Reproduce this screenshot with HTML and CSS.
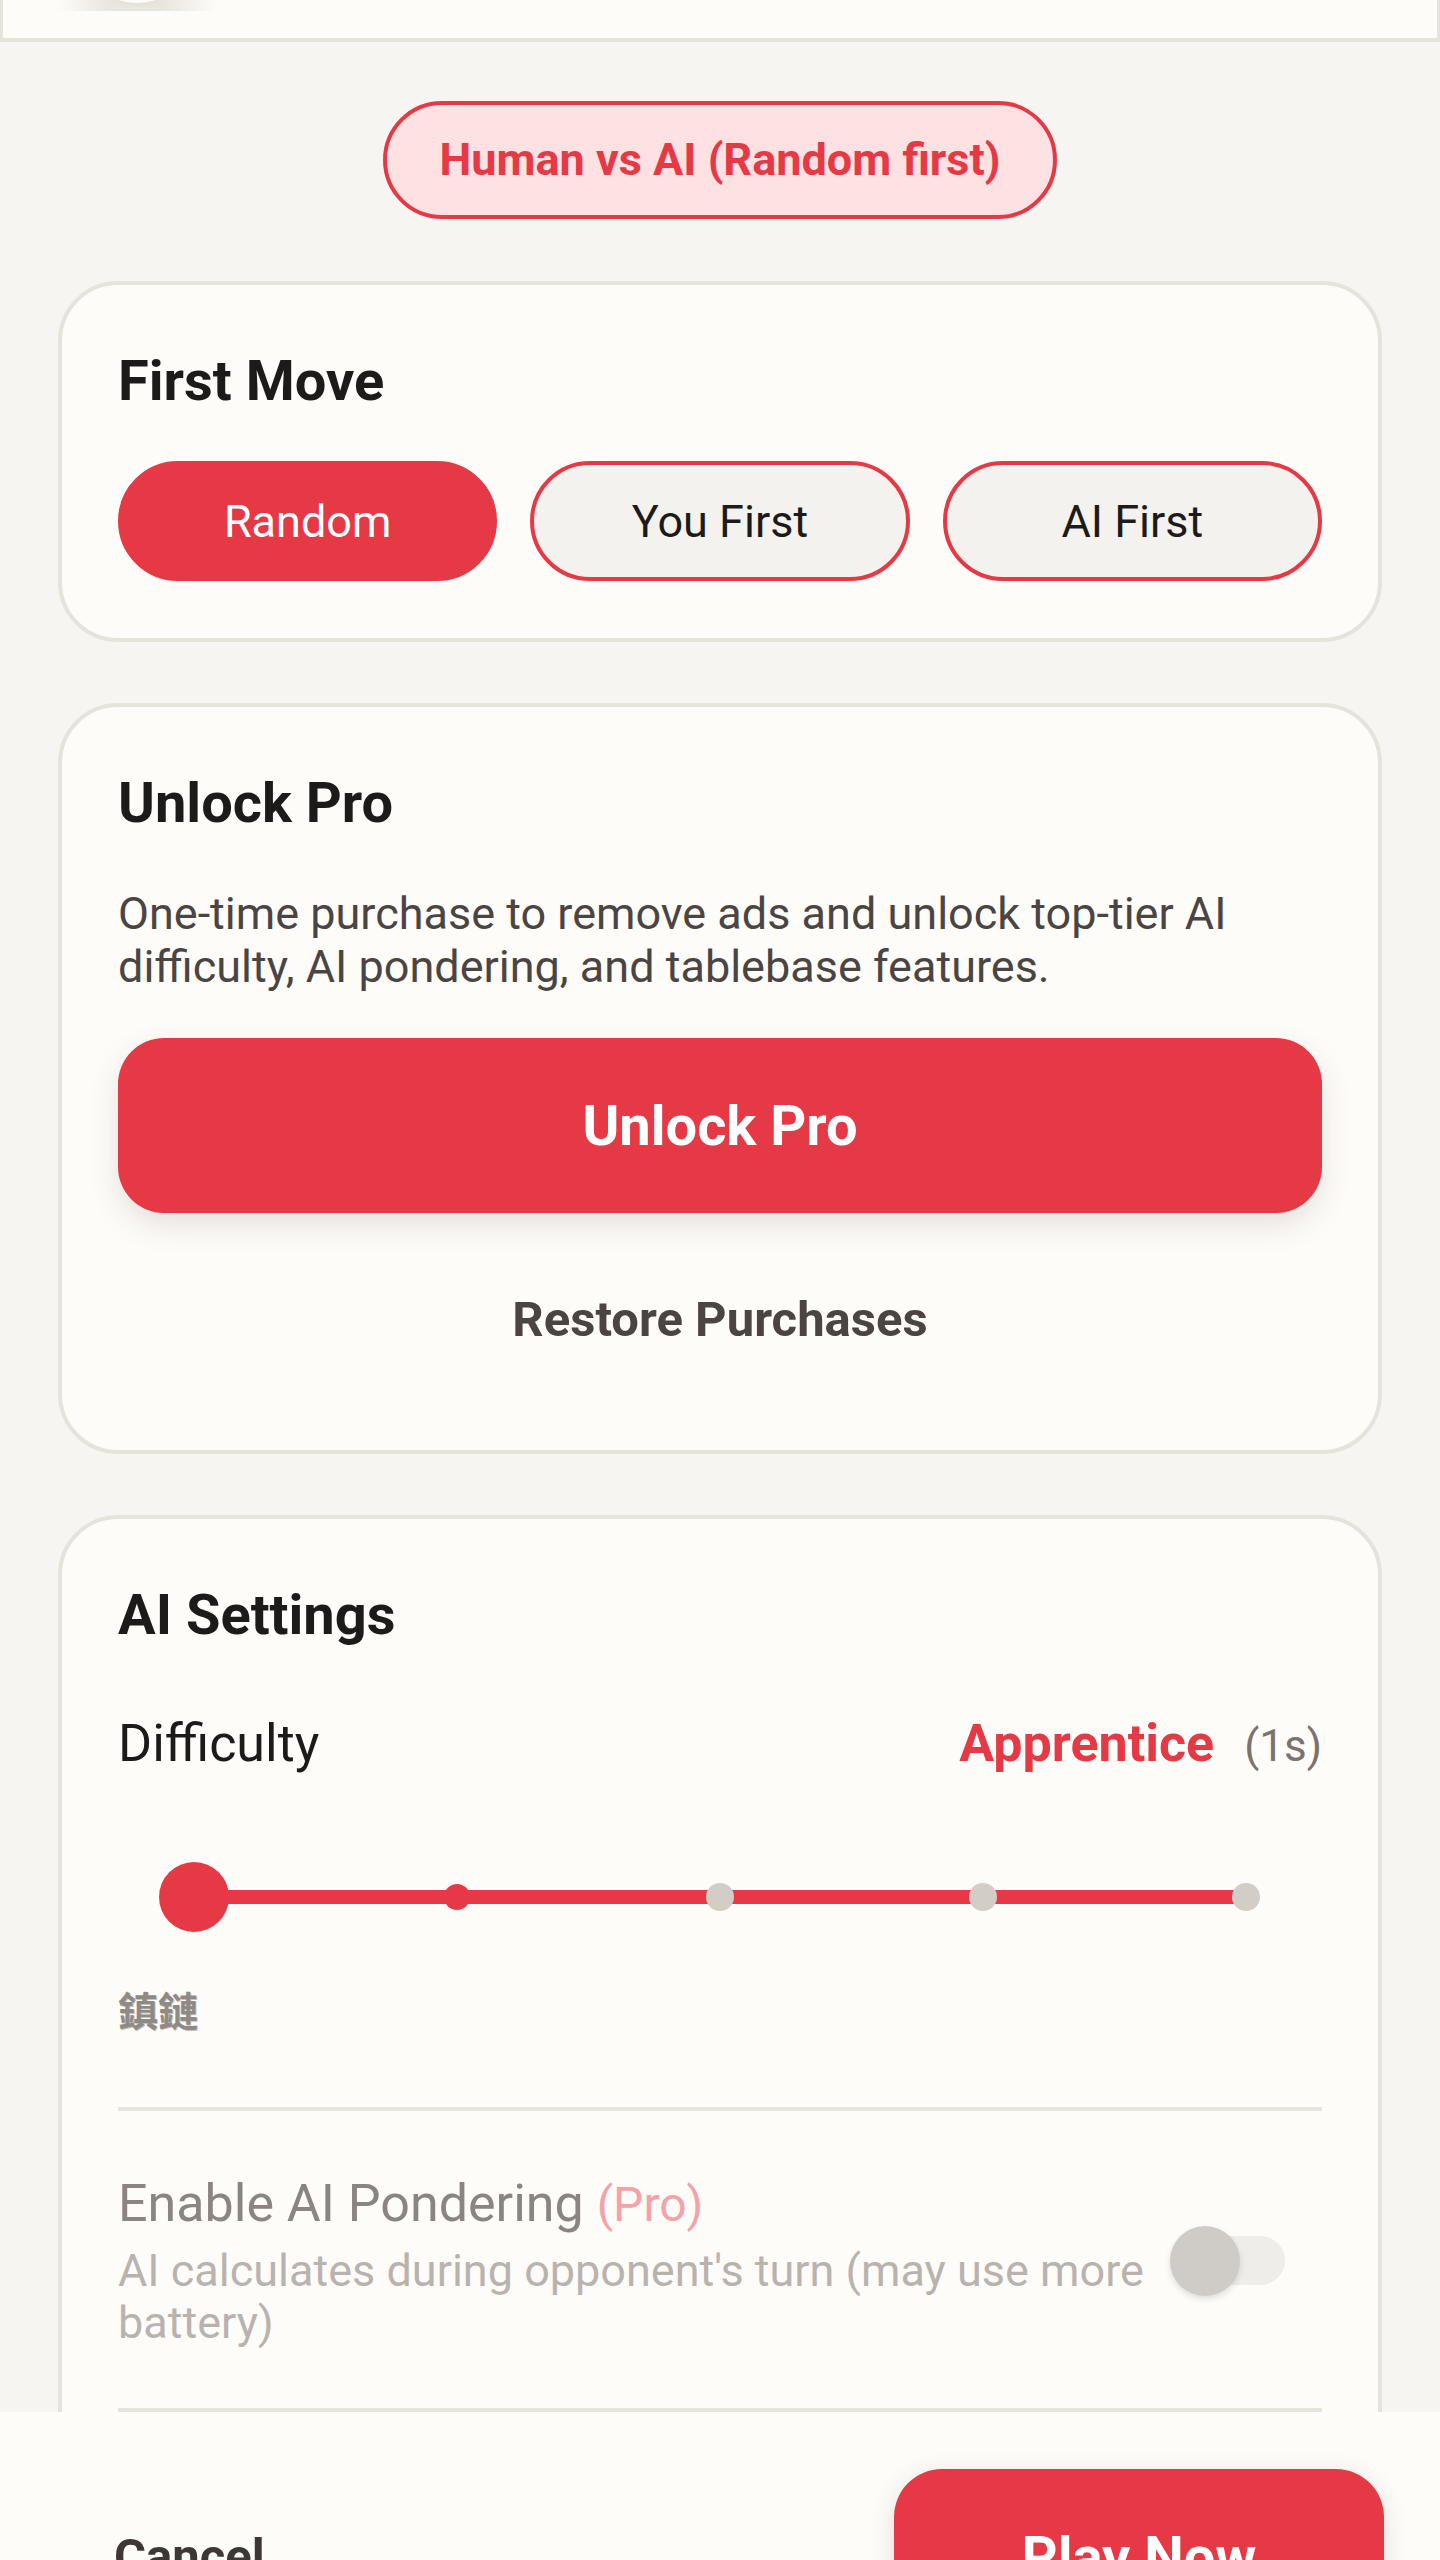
FILE: index.html
```html
<!DOCTYPE html>
<html lang="en">
<head>
<meta charset="utf-8">
<title>New Game</title>
<link rel="stylesheet" href="styles.css">
</head>
<body>
<div class="topbar">
  <div class="knob-shadow"></div>
  <div class="knob"></div>
</div>

<div class="mode-wrap">
  <div class="mode-pill">Human vs AI (Random first)</div>
</div>

<section class="card">
  <h2 class="card-title">First Move</h2>
  <div class="seg">
    <div class="seg-btn seg-btn--active">Random</div>
    <div class="seg-btn">You First</div>
    <div class="seg-btn">AI First</div>
  </div>
</section>

<section class="card">
  <h2 class="card-title">Unlock Pro</h2>
  <p class="card-desc">One-time purchase to remove ads and unlock top-tier AI difficulty, AI pondering, and tablebase features.</p>
  <div class="primary-btn">Unlock Pro</div>
  <div class="text-btn">Restore Purchases</div>
</section>

<section class="card card--last">
  <h2 class="card-title">AI Settings</h2>
  <div class="diff-row">
    <span class="diff-label">Difficulty</span>
    <span class="diff-value"><span class="diff-name">Apprentice</span><span class="diff-time">(1s)</span></span>
  </div>
  <div class="slider">
    <div class="slider-stops">
      <span class="stop stop--on"></span>
      <span class="stop stop--on"></span>
      <span class="stop"></span>
      <span class="stop"></span>
      <span class="stop"></span>
    </div>
    <span class="slider-thumb"></span>
  </div>
  <div class="level-label">鎮鏈</div>
  <div class="divider"></div>
  <div class="setting-row">
    <div class="setting-text">
      <div class="setting-title">Enable AI Pondering <span class="pro-tag">(Pro)</span></div>
      <div class="setting-desc">AI calculates during opponent's turn (may use more battery)</div>
    </div>
    <div class="switch">
      <span class="switch-track"></span>
      <span class="switch-thumb"></span>
    </div>
  </div>
  <div class="divider divider--second"></div>
  <div class="more-space"></div>
</section>

<div class="bottom-bar">
  <div class="cancel-btn">Cancel</div>
  <div class="play-btn">Play Now</div>
</div>
</body>
</html>
```

FILE: styles.css
```css
* { box-sizing: border-box; }

html, body {
  margin: 0;
  padding: 0;
}

body {
  background: #f7f5f2;
  font-family: Roboto, "Noto Sans", "Liberation Sans", sans-serif;
  color: #1c1b1a;
}

.topbar {
  position: relative;
  height: 42px;
  background: #fefcf9;
  border-left: 3px solid #e6e3dd;
  border-right: 3px solid #e6e3dd;
  border-bottom: 4px solid #e6e3dd;
  overflow: hidden;
}

.knob-shadow {
  position: absolute;
  left: 54px;
  top: 0;
  width: 160px;
  height: 11px;
  background: linear-gradient(90deg, rgba(230,226,220,0) 0%, rgba(230,226,220,0.9) 35%, rgba(230,226,220,0.9) 65%, rgba(230,226,220,0) 100%);
}

.knob {
  position: absolute;
  left: 74px;
  top: -114px;
  width: 120px;
  height: 120px;
  border-radius: 50%;
  background: #fefcf9;
  border: 3px solid #e6e3dd;
}

.mode-wrap {
  display: flex;
  justify-content: center;
  padding: 59px 0 62px;
}

.mode-pill {
  height: 118px;
  line-height: 110px;
  padding: 0 53px;
  border: 4px solid #e63946;
  border-radius: 60px;
  background: #fde1e3;
  color: #e63946;
  font-size: 45px;
  font-weight: 700;
}

.card {
  margin: 0 58px 61px;
  background: #fefcf9;
  border: 4px solid #e6e3dd;
  border-radius: 60px;
  padding: 60px 56px 57px;
}

.card-title {
  margin: 0;
  font-size: 56px;
  line-height: 72px;
  font-weight: 700;
  color: #1c1b1a;
}

.seg {
  margin-top: 44px;
  display: grid;
  grid-template-columns: repeat(3, 1fr);
  gap: 33px;
}

.seg-btn {
  height: 120px;
  border: 4px solid #e63946;
  border-radius: 60px;
  background: #f4f2ef;
  display: flex;
  align-items: center;
  justify-content: center;
  font-size: 45px;
  color: #1c1b1a;
}

.seg-btn--active {
  background: #e63946;
  color: #ffffff;
}

.card-desc {
  margin: 48px 0 0;
  font-size: 45px;
  line-height: 53px;
  color: #4a4543;
}

.primary-btn {
  margin-top: 45px;
  height: 175px;
  border-radius: 46px;
  background: #e63946;
  color: #ffffff;
  font-size: 56px;
  font-weight: 700;
  display: flex;
  align-items: center;
  justify-content: center;
  box-shadow: 0 12px 30px rgba(60, 50, 40, 0.13);
}

.text-btn {
  margin-top: 32px;
  height: 148px;
  display: flex;
  align-items: center;
  justify-content: center;
  font-size: 49px;
  font-weight: 700;
  color: #4a4543;
}

.diff-row {
  margin-top: 62px;
  display: flex;
  justify-content: space-between;
  align-items: baseline;
  line-height: 61px;
}

.diff-label {
  font-size: 52px;
  color: #1c1b1a;
}

.diff-name {
  font-size: 52px;
  font-weight: 700;
  color: #e63946;
}

.diff-time {
  margin-left: 30px;
  font-size: 44px;
  color: #7a7370;
}

.slider {
  position: relative;
  margin-top: 63px;
  height: 96px;
  padding: 0 62px;
}

.slider-stops {
  position: relative;
  height: 100%;
  display: flex;
  justify-content: space-between;
  align-items: center;
}

.slider-stops::before {
  content: "";
  position: absolute;
  left: 14px;
  right: 14px;
  top: 50%;
  height: 14px;
  margin-top: -7px;
  background: #e63946;
}

.stop {
  position: relative;
  width: 28px;
  height: 28px;
  border-radius: 50%;
  background: #d3cdc8;
}

.stop--on {
  background: #e63946;
  transform: scale(0.93);
}

.slider-thumb {
  position: absolute;
  left: 41px;
  top: 13px;
  width: 70px;
  height: 70px;
  border-radius: 50%;
  background: #e63946;
}

.level-label {
  margin-top: 36px;
  height: 56px;
  line-height: 56px;
  font-family: "Noto Sans CJK SC", "Noto Sans CJK TC", sans-serif;
  font-size: 40px;
  font-weight: 700;
  color: #8f8a86;
  text-shadow: 1px 1px 0 rgba(90, 84, 80, 0.35);
}

.divider {
  margin-top: 70px;
  height: 4px;
  background: #e6e3dd;
}

.setting-row {
  margin-top: 62px;
  display: flex;
  align-items: center;
  gap: 8px;
}

.setting-text {
  flex: 1;
}

.setting-title {
  font-size: 52px;
  line-height: 61px;
  color: #8a8482;
}

.pro-tag {
  font-size: 48px;
  color: #f4a2a8;
}

.setting-desc {
  margin-top: 10px;
  font-size: 45px;
  line-height: 52px;
  color: #b9b3af;
}

.switch {
  position: relative;
  width: 115px;
  height: 70px;
  margin-right: 37px;
  flex: none;
}

.switch-track {
  position: absolute;
  left: 10px;
  right: 0;
  top: 10px;
  height: 49px;
  border-radius: 25px;
  background: #efedea;
}

.switch-thumb {
  position: absolute;
  left: 0;
  top: 0;
  width: 70px;
  height: 70px;
  border-radius: 50%;
  background: #cfcbc7;
  box-shadow: 0 3px 6px rgba(0, 0, 0, 0.12);
}

.divider--second {
  margin-top: 59px;
}

.more-space {
  height: 320px;
}

.bottom-bar {
  position: fixed;
  left: 0;
  right: 0;
  bottom: 0;
  height: 148px;
  background: #fefcf9;
  display: flex;
  justify-content: space-between;
  align-items: flex-start;
  padding: 57px 56px 0 114px;
  overflow: hidden;
}

.cancel-btn {
  height: 175px;
  display: flex;
  align-items: center;
  font-size: 49px;
  font-weight: 700;
  color: #3d3835;
}

.play-btn {
  width: 490px;
  height: 175px;
  border-radius: 48px;
  background: #e63946;
  color: #ffffff;
  font-size: 56px;
  font-weight: 700;
  display: flex;
  align-items: center;
  justify-content: center;
  box-shadow: 0 6px 24px rgba(60, 50, 40, 0.15);
}
```
